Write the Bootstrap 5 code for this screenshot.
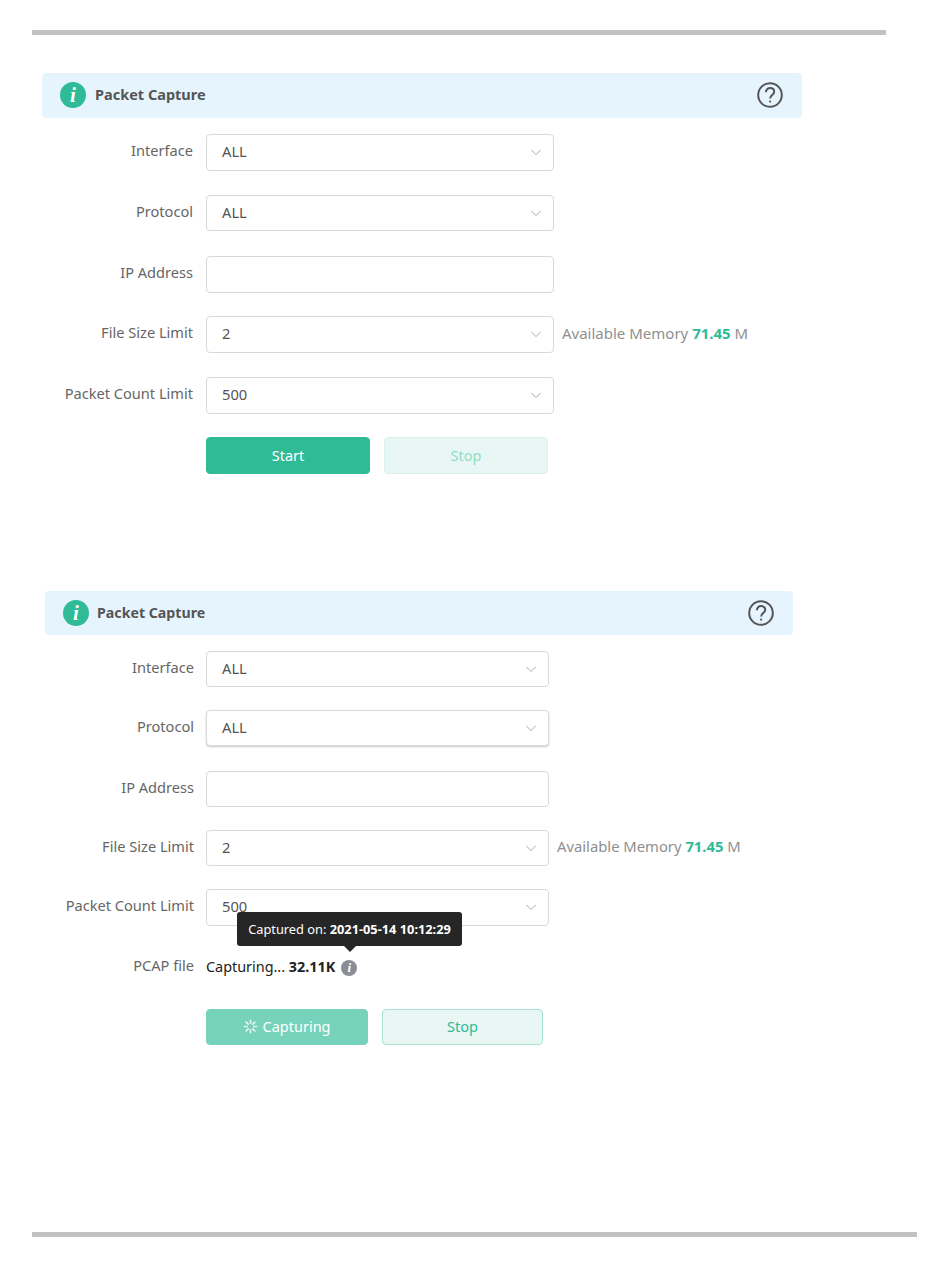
<!DOCTYPE html>
<html lang="en">
<head>
<meta charset="utf-8">
<title>Packet Capture</title>
<link rel="stylesheet" href="https://cdn.jsdelivr.net/npm/bootstrap@5.3.0/dist/css/bootstrap.min.css">
<style>
body{background:#fff;font-family:"Noto Sans","Liberation Sans",sans-serif;font-size:14.5px;color:#555}
.sheet{padding:30px 0 0 32px}
.rule-top,.rule-end{height:5px;background:#c2c2c2}
.rule-top{width:854px}
.rule-end{width:885px}
.cap-one{width:760px;margin:38px 0 0 10px}
.cap-two{width:748px;margin:117px 0 187px 13px}
.cap-head{height:45px;background:#e6f4fe;border-radius:4px;padding:0 19px 1px 18px;margin-bottom:16px}
.cap-two .cap-head{height:44px;padding:0 19px 0 18px}
.cap-title{font-weight:700;font-size:14.5px;color:#555;margin-left:9px}
.cap-two .cap-title{font-size:14.2px;margin-left:8px}
.help-ico{margin-left:auto}
.info-disc{width:26px;height:26px;border-radius:50%;background:#2fbb96;color:#fff;font:italic 700 21px/26px "Liberation Serif",serif;text-align:center}
.f-row{height:37px;margin-bottom:24px}
.f-short{height:36px}
.f-gap-23{margin-bottom:23px}
.f-gap-25{margin-bottom:25px}
.f-label{width:151px;margin:0 13px 3px 0;text-align:right;color:#666;font-size:14.6px;padding:0}
.cap-two .f-label{width:149px;margin-right:12px}
.f-select,.f-input{width:348px;height:100%;border:1px solid #d9d9d9;border-radius:4px;color:#555;font-size:14.7px;padding:0 15px 2px;box-shadow:none;background-color:#fff}
.cap-two .f-select,.cap-two .f-input{width:343px}
.f-select{background-size:12px 7px;background-position:right 11px center;background-image:url("data:image/svg+xml,%3Csvg xmlns='http://www.w3.org/2000/svg' viewBox='0 0 14 8'%3E%3Cpath d='M1.5 1l5.5 5.5L12.5 1' fill='none' stroke='%23c4c4c4' stroke-width='1.2'/%3E%3C/svg%3E")}
.f-raised{box-shadow:0 1px 2px rgba(0,0,0,.22)}
.mem-note{margin:0 0 2px 8px;color:#8f8f8f;font-size:15px}
.cap-two .mem-note{font-size:14.8px;margin-bottom:3px}
.mem-val{color:#2fbb96;font-weight:700}
.act-row{padding-left:164px;gap:14px}
.cap-two .act-row{padding-left:161px}
.act-btn{width:164px;height:37px;border-radius:4px;font-size:14.5px;padding:0 0 1px;line-height:1}
.cap-two .act-btn{width:162px;height:36px}
.cap-two .act-stop{width:161px}
.act-go,.act-go:disabled{background:#2fbb96;border-color:#2fbb96;color:#fff;opacity:1}
.act-busy,.act-busy:disabled{background:#77d2bb;border-color:#77d2bb;color:#fff;opacity:1}
.act-stop{background:#e8f7f3;border:1px solid #a6e3d3;color:#2fbb96}
.act-stop:disabled{background:#e8f7f3;border-color:#d8f1ea;color:#90dcc6;opacity:1}
.pcap-row{height:20px;margin-bottom:32px;position:relative;margin-top:31px}
.pcap-text{color:#222;font-size:14.4px}
.grey-i{display:inline-block;width:16px;height:16px;border-radius:50%;background:#8a8d96;color:#fff;font:italic 700 13px/16px "Liberation Serif",serif;text-align:center;margin-left:6px;vertical-align:0}
.cap-tip{position:absolute;left:192px;bottom:31px;width:225px;height:34px;background:#262626;border-radius:3px;color:#fff;font-size:12.8px;text-align:center;line-height:34px;white-space:nowrap}
.cap-tip::after{content:"";position:absolute;left:107px;bottom:-6px;border:6px solid transparent;border-bottom:0;border-top-color:#262626}
</style>
</head>
<body>
<div class="sheet">
  <div class="rule-top"></div>

  <section class="cap-one">
    <div class="cap-head d-flex align-items-center">
      <span class="info-disc">i</span>
      <span class="cap-title">Packet Capture</span>
      <svg class="help-ico" width="26" height="26" viewBox="0 0 26 26" fill="none" stroke="#555" stroke-width="2"><circle cx="13" cy="13" r="11.8"/><path d="M8.9 10.2c0-2.5 1.8-4.1 4.2-4.1s4.1 1.5 4.1 3.7c0 3.2-4.1 3.4-4.1 6.7"/><circle cx="13.1" cy="19.6" r="1.1" fill="#555" stroke="none"/></svg>
    </div>
    <div class="f-row d-flex align-items-center"><label class="f-label">Interface</label><select class="form-select f-select"><option>ALL</option></select></div>
    <div class="f-row f-short f-gap-25 d-flex align-items-center"><label class="f-label">Protocol</label><select class="form-select f-select"><option>ALL</option></select></div>
    <div class="f-row f-gap-23 d-flex align-items-center"><label class="f-label">IP Address</label><input class="form-control f-input" type="text"></div>
    <div class="f-row d-flex align-items-center"><label class="f-label">File Size Limit</label><select class="form-select f-select"><option>2</option></select><span class="mem-note">Available Memory <span class="mem-val">71.45</span> M</span></div>
    <div class="f-row f-gap-23 d-flex align-items-center"><label class="f-label">Packet Count Limit</label><select class="form-select f-select"><option>500</option></select></div>
    <div class="act-row d-flex">
      <button class="btn act-btn act-go" type="button">Start</button>
      <button class="btn act-btn act-stop" type="button" disabled>Stop</button>
    </div>
  </section>

  <section class="cap-two">
    <div class="cap-head d-flex align-items-center">
      <span class="info-disc">i</span>
      <span class="cap-title">Packet Capture</span>
      <svg class="help-ico" width="26" height="26" viewBox="0 0 26 26" fill="none" stroke="#555" stroke-width="2"><circle cx="13" cy="13" r="11.8"/><path d="M8.9 10.2c0-2.5 1.8-4.1 4.2-4.1s4.1 1.5 4.1 3.7c0 3.2-4.1 3.4-4.1 6.7"/><circle cx="13.1" cy="19.6" r="1.1" fill="#555" stroke="none"/></svg>
    </div>
    <div class="f-row f-short f-gap-23 d-flex align-items-center"><label class="f-label">Interface</label><select class="form-select f-select"><option>ALL</option></select></div>
    <div class="f-row f-short f-gap-25 d-flex align-items-center"><label class="f-label">Protocol</label><select class="form-select f-select f-raised"><option>ALL</option></select></div>
    <div class="f-row f-short f-gap-23 d-flex align-items-center"><label class="f-label">IP Address</label><input class="form-control f-input" type="text"></div>
    <div class="f-row f-short f-gap-23 d-flex align-items-center"><label class="f-label">File Size Limit</label><select class="form-select f-select"><option>2</option></select><span class="mem-note">Available Memory <span class="mem-val">71.45</span> M</span></div>
    <div class="f-row f-gap-23 d-flex align-items-center"><label class="f-label">Packet Count Limit</label><select class="form-select f-select"><option>500</option></select></div>
    <div class="pcap-row d-flex align-items-center">
      <label class="f-label">PCAP file</label>
      <span class="pcap-text">Capturing... <b>32.11K</b><span class="grey-i">i</span></span>
      <div class="cap-tip">Captured on: <b>2021-05-14 10:12:29</b></div>
    </div>
    <div class="act-row d-flex">
      <button class="btn act-btn act-busy d-flex align-items-center justify-content-center gap-1" type="button" disabled>
        <svg width="15" height="15" viewBox="0 0 16 16" stroke="#fff" stroke-width="1.8" stroke-linecap="round" opacity=".8"><path d="M8 1.5v3M8 11.5v3M1.5 8h3M11.5 8h3M3.4 3.4l2.1 2.1M10.5 10.5l2.1 2.1M3.4 12.6l2.1-2.1M10.5 5.5l2.1-2.1"/></svg>
        Capturing
      </button>
      <button class="btn act-btn act-stop" type="button">Stop</button>
    </div>
  </section>

  <div class="rule-end"></div>
</div>
<script src="https://cdn.jsdelivr.net/npm/bootstrap@5.3.0/dist/js/bootstrap.bundle.min.js"></script>
</body>
</html>
